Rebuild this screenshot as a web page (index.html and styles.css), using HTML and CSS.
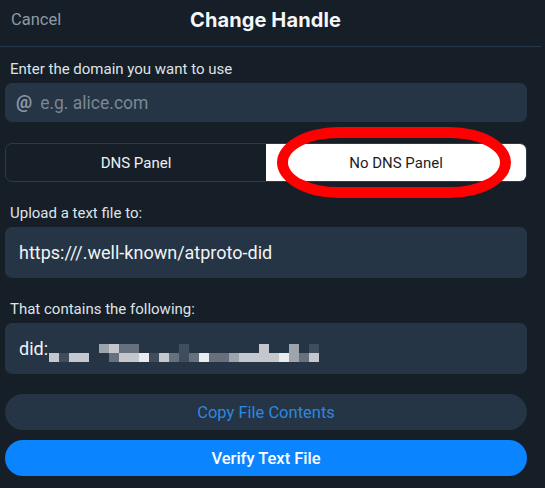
FILE: index.html
```html
<!DOCTYPE html>
<html>
<head>
<meta charset="utf-8">
<link rel="stylesheet" href="styles.css">
</head>
<body>
<div class="screen">
  <header class="header">
    <span class="cancel">Cancel</span>
    <h1 class="title">Change Handle</h1>
  </header>
  <main class="content">
    <div class="label first">Enter the domain you want to use</div>
    <div class="input">
      <span class="at">@</span>
      <span class="placeholder">e.g. alice.com</span>
    </div>
    <div class="segmented">
      <div class="seg">DNS Panel</div>
      <div class="seg active">No DNS Panel</div>
      <div class="annotation"></div>
    </div>
    <div class="label">Upload a text file to:</div>
    <div class="box">https:///.well-known/atproto-did</div>
    <div class="label">That contains the following:</div>
    <div class="box">
      <span>did:</span>
      <span class="pixels">
        <span class="row">
          <i class="x"></i><i class="x"></i><i class="x"></i><i class="x"></i><i class="x"></i>
          <i class="m"></i><i class="l"></i><i class="g"></i><i class="g"></i>
          <i class="x"></i><i class="x"></i><i class="x"></i><i class="x"></i>
          <i class="d"></i>
          <i class="x"></i><i class="x"></i><i class="x"></i><i class="x"></i><i class="x"></i><i class="x"></i><i class="x"></i>
          <i class="l"></i>
          <i class="x"></i><i class="x"></i>
          <i class="m"></i>
          <i class="x"></i>
          <i class="d"></i>
        </span>
        <span class="row">
          <i class="l"></i><i class="d"></i><i class="l"></i><i class="l"></i>
          <i class="x"></i><i class="x"></i>
          <i class="g"></i><i class="l"></i><i class="l"></i><i class="w"></i><i class="d"></i><i class="l"></i><i class="g"></i><i class="d"></i><i class="g"></i><i class="w"></i><i class="g"></i><i class="g"></i><i class="m"></i><i class="l"></i><i class="l"></i><i class="l"></i><i class="l"></i><i class="w"></i><i class="m"></i><i class="g"></i><i class="l"></i>
        </span>
      </span>
    </div>
    <button class="btn secondary">Copy File Contents</button>
    <button class="btn primary">Verify Text File</button>
  </main>
</div>
</body>
</html>
```
FILE: styles.css
```css
* { box-sizing: border-box; }
html, body {
  margin: 0;
  padding: 0;
  background: #161e28;
  font-family: Roboto, "Noto Sans", sans-serif;
  color: #e6e9ec;
}
.screen {
  width: 545px;
  height: 488px;
  overflow: hidden;
}
.header {
  width: 541px;
  height: 47px;
  border-bottom: 1px solid #263747;
  position: relative;
  display: flex;
  align-items: center;
  justify-content: center;
  padding-bottom: 7px;
}
.cancel {
  position: absolute;
  left: 11px;
  top: 10px;
  font-size: 16.5px;
  color: #8e99a6;
}
.title {
  margin: 0 0 0 -10px;
  font-family: Inter, Roboto, sans-serif;
  font-size: 20px;
  font-weight: 700;
  color: #f4f6f8;
  letter-spacing: 0.1px;
}
.content {
  width: 527px;
  padding: 0 0 0 5px;
  display: flex;
  flex-direction: column;
}
.label {
  font-size: 15px;
  line-height: 18px;
  color: #dfe3e7;
  padding-left: 5px;
  margin-top: 22px;
  margin-bottom: 5px;
}
.label.first {
  margin-top: 13px;
  margin-bottom: 5px;
}
.input {
  height: 39px;
  border-radius: 7px;
  background: #253545;
  display: flex;
  align-items: center;
  padding-left: 11px;
}
.at {
  font-size: 18px;
  font-weight: 700;
  color: #8b97a4;
  margin-right: 8px;
  margin-top: -2px;
}
.placeholder {
  font-size: 17.5px;
  color: #7b8896;
}
.segmented {
  position: relative;
  margin-top: 21px;
  height: 39px;
  display: flex;
  border: 1px solid #2c3b4a;
  border-radius: 7px;
}
.seg {
  flex: 1;
  display: flex;
  align-items: center;
  justify-content: center;
  font-size: 15px;
  color: #eef1f3;
}
.seg.active {
  background: #ffffff;
  color: #1d1d1f;
  border-radius: 0 6px 6px 0;
}
.annotation {
  position: absolute;
  left: 271px;
  top: -17px;
  width: 234px;
  height: 71px;
  border: 11px solid #ff0000;
  border-radius: 62px / 36px;
}
.box {
  height: 51px;
  border-radius: 7px;
  background: #253545;
  display: flex;
  align-items: center;
  padding-left: 14px;
  font-size: 18px;
  color: #f1f3f5;
}
.pixels {
  display: flex;
  flex-direction: column;
  margin-left: 1px;
  margin-top: 9px;
}
.row {
  display: flex;
}
.row i {
  display: block;
  width: 10px;
  height: 9px;
}
.row i.x { background: transparent; }
.row i.w { background: #e9ebee; }
.row i.l { background: #c4c8ce; }
.row i.m { background: #9ea4ac; }
.row i.g { background: #66717d; }
.row i.d { background: #3f4d5c; }
.btn {
  border: none;
  height: 36px;
  border-radius: 18px;
  font-family: inherit;
  font-size: 16.5px;
  display: flex;
  align-items: center;
  justify-content: center;
  width: 100%;
}
.secondary {
  margin-top: 20px;
  background: #253545;
  color: #2c88e0;
}
.primary {
  margin-top: 10px;
  background: #0a85ff;
  color: #ffffff;
  font-weight: 500;
}
```
